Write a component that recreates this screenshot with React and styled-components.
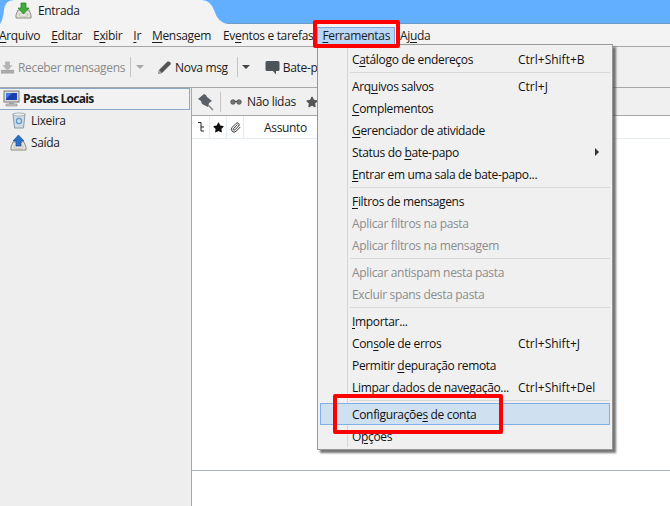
import styled, { createGlobalStyle } from "styled-components";
import { FaStar } from "react-icons/fa";
import { Paperclip } from "lucide-react";

const Global = createGlobalStyle`
  html, body { margin: 0; padding: 0; background: #fff; }
  body { font-family: "Open Sans", "Noto Sans", sans-serif; font-size: 12px; letter-spacing: -0.33px; color: #1b1b1b; }
  u { text-underline-offset: 2px; text-decoration-thickness: 1px; }
`;

const Window = styled.div`
  position: relative;
  width: 670px;
  height: 506px;
  overflow: hidden;
  display: flex;
  flex-direction: column;
`;

const TabStrip = styled.div`
  height: 24px;
  flex: none;
  background: #62aeff;
  box-shadow: inset 0 -1px 0 #6f9ccb;
`;

const Tab = styled.div`
  position: relative;
  width: 228px;
  height: 24px;
  display: flex;
  align-items: center;
  gap: 6px;
  padding: 0 0 4px 15px;
  box-sizing: border-box;
  svg.shape { position: absolute; left: 0; top: 0; }
  span, svg.icon { position: relative; }
`;

const MenuBar = styled.div`
  height: 22px;
  flex: none;
  background: #f3f3f3;
  border-bottom: 1px solid #a6a6a6;
  display: flex;
  align-items: center;
`;

const MenuTitle = styled.div`
  position: relative;
  top: 1px;
  margin-left: ${(p) => p.$gap}px;
  height: 18px;
  line-height: 17px;
  white-space: nowrap;
  ${(p) => p.$active && `
    padding: 0 5px;
    background: #b9d7f7;
    box-shadow: inset 0 0 0 1px #7aa9d9;
  `}
`;

const ToolBar = styled.div`
  height: 41px;
  flex: none;
  box-sizing: border-box;
  background: #f0f0f0;
  border-bottom: 1px solid #a8a8a8;
  display: flex;
  align-items: center;
  color: #1b1b1b;
`;

const ToolButton = styled.div`
  display: flex;
  align-items: center;
  gap: 3px;
  margin-left: ${(p) => p.$gap}px;
  white-space: nowrap;
  color: ${(p) => (p.$off ? "#8a8a8a" : "inherit")};
`;

const ToolDivider = styled.div`
  width: 1px;
  height: 20px;
  background: #c4c4c4;
  margin-left: ${(p) => p.$gap}px;
`;

const Caret = styled.div`
  width: 0;
  height: 0;
  margin-left: ${(p) => p.$gap}px;
  border-left: 4px solid transparent;
  border-right: 4px solid transparent;
  border-top: 4px solid ${(p) => (p.$off ? "#a8a8a8" : "#444")};
`;

const Body = styled.div`
  flex: 1;
  display: flex;
  min-height: 0;
`;

const Sidebar = styled.div`
  width: 192px;
  flex: none;
  box-sizing: border-box;
  background: #eeeeee;
  border-right: 1px solid #a8a8a8;
`;

const FolderRow = styled.div`
  height: 22px;
  box-sizing: border-box;
  display: flex;
  align-items: center;
  gap: ${(p) => (p.$root ? 3 : 4)}px;
  padding-left: ${(p) => p.$indent}px;
  padding-bottom: 2px;
  font-weight: ${(p) => (p.$root ? 700 : 400)};
  letter-spacing: ${(p) => (p.$root ? "-0.7px" : "inherit")};
  ${(p) => p.$root && `
    width: 190px;
    border: 1px solid #8ba7c6;
    border-left: none;
    background: #f2f2f2;
  `}
`;

const Main = styled.div`
  flex: 1;
  display: flex;
  flex-direction: column;
  background: #fff;
`;

const FilterBar = styled.div`
  height: 28px;
  flex: none;
  box-sizing: border-box;
  background: #f0f0f0;
  border-bottom: 1px solid #a8a8a8;
  display: flex;
  align-items: center;
  padding-left: 5px;
`;

const FilterItem = styled.div`
  display: flex;
  align-items: center;
  gap: 5px;
  margin-left: ${(p) => p.$gap}px;
  white-space: nowrap;
`;

const ColumnHeader = styled.div`
  height: 23px;
  flex: none;
  box-sizing: border-box;
  border-bottom: 1px solid #e4edf5;
  display: flex;
`;

const Column = styled.div`
  width: ${(p) => p.$width}px;
  box-sizing: border-box;
  display: flex;
  align-items: center;
  justify-content: ${(p) => (p.$text ? "flex-start" : "center")};
  padding-left: ${(p) => (p.$text ? 20 : 0)}px;
  border-right: 1px solid ${(p) => (p.$text ? "transparent" : "#e4edf5")};
`;

const ThreadList = styled.div`
  height: 331px;
  flex: none;
  border-bottom: 1px solid #a6b4c8;
`;

const Menu = styled.div`
  position: absolute;
  left: 317px;
  top: 44px;
  width: 296px;
  box-sizing: border-box;
  padding: 3px 2px 2px;
  background: #f0f0f0;
  border: 1px solid #979797;
  box-shadow: 3px 3px 2px rgba(60, 60, 60, 0.7);
`;

const Gutter = styled.div`
  position: absolute;
  left: 29px;
  top: 2px;
  bottom: 2px;
  width: 1px;
  background: #d7d7d7;
`;

const Row = styled.div`
  position: relative;
  height: 22px;
  box-sizing: border-box;
  display: flex;
  align-items: center;
  padding-left: 32px;
  white-space: nowrap;
  color: ${(p) => (p.$off ? "#8d8d8d" : "#111")};
  ${(p) => p.$hot && `
    background: #cfe0f1;
    box-shadow: inset 0 0 0 1px #80b0e6;
  `}
`;

const Label = styled.span`
  width: 166px;
  flex: none;
`;

const Keys = styled.span`
  letter-spacing: 0;
`;

const Arrow = styled.div`
  position: absolute;
  right: 11px;
  top: 7px;
  border-top: 4px solid transparent;
  border-bottom: 4px solid transparent;
  border-left: 4px solid #333;
`;

const Separator = styled.div`
  height: 5px;
  margin-left: 30px;
  display: flex;
  align-items: center;
  &::after { content: ""; flex: 1; height: 1px; background: #d7d7d7; }
`;

const Callout = styled.div`
  position: absolute;
  left: ${(p) => p.$x}px;
  top: ${(p) => p.$y}px;
  width: ${(p) => p.$w}px;
  height: ${(p) => p.$h}px;
  box-sizing: border-box;
  border: 4px solid #ff0000;
  border-radius: 2px;
`;

const InboxIcon = () => (
  <svg className="icon" width="17" height="17" viewBox="0 0 17 17">
    <path d="M3 8 L1 13 V16 H16 V13 L14 8 Z" fill="#e4e4dc" stroke="#8d8d80" />
    <path d="M4 12 H13 L12 14 H5 Z" fill="#fff" stroke="#a5a59a" strokeWidth=".6" />
    <path d="M6 1 H11 V6 H14 L8.5 12 L3 6 H6 Z" fill="#3fae3a" stroke="#24801f" strokeWidth=".7" />
  </svg>
);

const ReceiveIcon = () => (
  <svg width="15" height="15" viewBox="0 0 16 15">
    <path d="M1 10 H15 V14 H1 Z" fill="#a9a9a9" />
    <path d="M5.5 1 H10.5 V5 H13.5 L8 11 L2.5 5 H5.5 Z" fill="#b4b4b4" />
  </svg>
);

const PencilIcon = () => (
  <svg width="15" height="15" viewBox="0 0 15 15">
    <path d="M1 14 L2 10 L10.5 1.5 Q12 1 13.5 2.5 Q14 4 13.5 4.5 L5 13 Z" fill="#555" />
    <path d="M1 14 L2 10 L5 13 Z" fill="#aaa" />
  </svg>
);

const ChatIcon = () => (
  <svg width="15" height="15" viewBox="0 0 15 15">
    <path d="M2 1 H13 Q14.5 1 14.5 2.5 V9.5 Q14.5 11 13 11 H11 V14.5 L8 11 H2 Q.5 11 .5 9.5 V2.5 Q.5 1 2 1 Z" fill="#4c5359" />
  </svg>
);

const PinIcon = () => (
  <svg width="18" height="18" viewBox="0 0 18 18">
    <path d="M7 1 L1 6 L4 8 L5 11 L11 14 L12 10 L15 8 L10 4 L9 2 Z" fill="#5a6066" />
    <path d="M11 12 L16 17" stroke="#7b8086" strokeWidth="1.4" />
  </svg>
);

const GlassesIcon = () => (
  <svg width="12" height="6" viewBox="0 0 12 6">
    <circle cx="3" cy="3" r="2.3" fill="#777" stroke="#444" strokeWidth=".7" />
    <circle cx="9" cy="3" r="2.3" fill="#777" stroke="#444" strokeWidth=".7" />
    <path d="M5 2.5 H7" stroke="#444" />
  </svg>
);

const ThreadIcon = () => (
  <svg width="8" height="10" viewBox="0 0 8 10">
    <path d="M1 .5 H4 V5 H7 M4 5 V9 H7" fill="none" stroke="#222" />
  </svg>
);

const ComputerIcon = () => (
  <svg width="17" height="17" viewBox="0 0 17 17">
    <rect x="1" y="1" width="15" height="11" fill="#dcdcdc" stroke="#777" />
    <rect x="3" y="3" width="11" height="7" fill="#1c3fb0" />
    <path d="M3 3 H9 L3 9 Z" fill="#3f7be0" />
    <path d="M6 12 H11 V14 H6 Z" fill="#aaa" />
    <path d="M3 14 H14 V16 H3 Z" fill="#c9c9c9" stroke="#888" strokeWidth=".6" />
  </svg>
);

const TrashIcon = () => (
  <svg width="16" height="17" viewBox="0 0 16 17">
    <path d="M2 2 H14 L12.5 16 H3.5 Z" fill="#cfdbe4" stroke="#8b9aa6" />
    <ellipse cx="8" cy="2.5" rx="6" ry="1.5" fill="#eef3f6" stroke="#8b9aa6" strokeWidth=".7" />
    <circle cx="8" cy="9" r="2.6" fill="none" stroke="#5b9bd0" strokeWidth="1.2" />
  </svg>
);

const OutboxIcon = () => (
  <svg width="17" height="17" viewBox="0 0 17 17">
    <path d="M3 8 L1 13 V16 H16 V13 L14 8 Z" fill="#e4e4dc" stroke="#8d8d80" />
    <path d="M4 12 H13 L12 14 H5 Z" fill="#fff" stroke="#a5a59a" strokeWidth=".6" />
    <path d="M8.5 1 L14 7 H11 V12 H6 V7 H3 Z" fill="#2a70c8" stroke="#1a4f96" strokeWidth=".7" />
  </svg>
);

const menuItems = [
  { label: <>C<u>a</u>tálogo de endereços</>, keys: "Ctrl+Shift+B" },
  "sep",
  { label: <>Arq<u>u</u>ivos salvos</>, keys: "Ctrl+J" },
  { label: <><u>C</u>omplementos</> },
  { label: <><u>G</u>erenciador de atividade</> },
  { label: <>Status do <u>b</u>ate-papo</>, sub: true },
  { label: <><u>E</u>ntrar em uma sala de bate-papo...</> },
  "sep",
  { label: <><u>F</u>iltros de mensagens</> },
  { label: <>Aplicar filtros na pasta</>, off: true },
  { label: <>Aplicar filtros na mensagem</>, off: true },
  "sep",
  { label: <>Aplicar antispam nesta pasta</>, off: true },
  { label: <>Excluir spans desta pasta</>, off: true },
  "sep",
  { label: <><u>I</u>mportar...</> },
  { label: <>Con<u>s</u>ole de erros</>, keys: "Ctrl+Shift+J" },
  { label: <>Permitir <u>d</u>epuração remota</> },
  { label: <><u>L</u>impar dados de navegação...</>, keys: "Ctrl+Shift+Del" },
  "sep",
  { label: <>Configuraçõe<u>s</u> de conta</>, hot: true },
  { label: <>O<u>p</u>ções</> },
];

export default function App() {
  return (
    <Window>
      <Global />
      <TabStrip>
        <Tab>
          <svg className="shape" width="228" height="24" viewBox="0 0 228 24">
            <path d="M0 24 Q3 20 4 10 Q5 0 14 0 H202 Q210 0 214 10 Q218 23 228 24 Z" fill="#f3f3f3" />
          </svg>
          <InboxIcon />
          <span>Entrada</span>
        </Tab>
      </TabStrip>
      <MenuBar>
        <MenuTitle $gap={-1}><u>A</u>rquivo</MenuTitle>
        <MenuTitle $gap={11}><u>E</u>ditar</MenuTitle>
        <MenuTitle $gap={11}>E<u>x</u>ibir</MenuTitle>
        <MenuTitle $gap={11}><u>I</u>r</MenuTitle>
        <MenuTitle $gap={11}><u>M</u>ensagem</MenuTitle>
        <MenuTitle $gap={12}>Ev<u>e</u>ntos e tarefas</MenuTitle>
        <MenuTitle $gap={4} $active><u>F</u>erramentas</MenuTitle>
        <MenuTitle $gap={5}>Aj<u>u</u>da</MenuTitle>
      </MenuBar>
      <ToolBar>
        <ToolButton $off><ReceiveIcon />Receber mensagens</ToolButton>
        <ToolDivider $gap={5} />
        <Caret $off $gap={5} />
        <ToolButton $gap={13}><PencilIcon />Nova msg</ToolButton>
        <ToolDivider $gap={9} />
        <Caret $gap={4} />
        <ToolButton $gap={15}><ChatIcon />Bate-papo</ToolButton>
      </ToolBar>
      <Body>
        <Sidebar>
          <FolderRow $root $indent={3}><ComputerIcon />Pastas Locais</FolderRow>
          <FolderRow $indent={11}><TrashIcon />Lixeira</FolderRow>
          <FolderRow $indent={10}><OutboxIcon />Saída</FolderRow>
        </Sidebar>
        <Main>
          <FilterBar>
            <PinIcon />
            <ToolDivider $gap={5} />
            <FilterItem $gap={9}><GlassesIcon />Não lidas</FilterItem>
            <FilterItem $gap={10}><FaStar size={12} color="#555" /></FilterItem>
          </FilterBar>
          <ColumnHeader>
            <Column $width={18}><ThreadIcon /></Column>
            <Column $width={17}><FaStar size={11} color="#111" /></Column>
            <Column $width={17}><Paperclip size={11} color="#222" /></Column>
            <Column $text $width={120}>Assunto</Column>
          </ColumnHeader>
          <ThreadList />
        </Main>
      </Body>
      <Menu>
        <Gutter />
        {menuItems.map((item, i) =>
          item === "sep" ? (
            <Separator key={i} />
          ) : (
            <Row key={i} $off={item.off} $hot={item.hot}>
              <Label>{item.label}</Label>
              <Keys>{item.keys}</Keys>
              {item.sub && <Arrow />}
            </Row>
          )
        )}
      </Menu>
      <Callout $x={313} $y={20} $w={87} $h={28} />
      <Callout $x={333} $y={394} $w={170} $h={40} />
    </Window>
  );
}
